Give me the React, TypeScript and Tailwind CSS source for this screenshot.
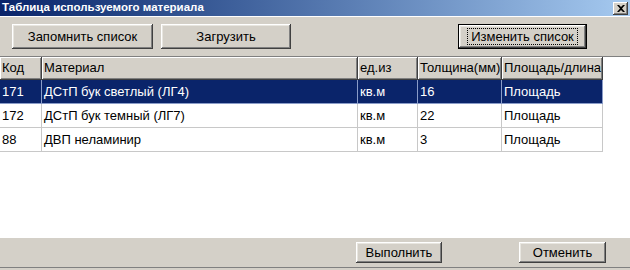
import React from "react";

interface Row {
  code: string;
  name: string;
  unit: string;
  thick: string;
  kind: string;
}

const rows: Row[] = [
  { code: "171", name: "ДСтП бук светлый (ЛГ4)", unit: "кв.м", thick: "16", kind: "Площадь" },
  { code: "172", name: "ДСтП бук темный (ЛГ7)", unit: "кв.м", thick: "22", kind: "Площадь" },
  { code: "88", name: "ДВП неламинир", unit: "кв.м", thick: "3", kind: "Площадь" },
];

const cols = "grid grid-cols-[42px_316px_60px_84px_101px]";

const btn =
  "flex items-center justify-center bg-[#d4d0c8] text-[13px] text-black shadow-[inset_-1px_-1px_#404040,inset_1px_1px_#ffffff,inset_-2px_-2px_#808080,inset_2px_2px_#e8e6e0]";

const Button = ({ label, className }: { label: string; className: string }) => (
  <div className={`${btn} ${className}`}>{label}</div>
);

const App = () => {
  const headers = ["Код", "Материал", "ед.из", "Толщина(мм)", "Площадь/длина"];

  return (
    <div className="w-[630px] h-[270px] bg-[#d4d0c8] flex flex-col font-['Liberation_Sans',Arial,sans-serif] overflow-hidden">
      {/* заголовок окна */}
      <div className="h-[16px] flex items-center justify-between bg-gradient-to-r from-[#0a246a] to-[#a6caf0] pl-[2px] pr-[2px]">
        <span className="text-white text-[11.5px] font-bold leading-none">Таблица используемого материала</span>
        <div className="w-[15px] h-[13px] bg-[#d4d0c8] flex items-center justify-center shadow-[inset_-1px_-1px_#404040,inset_1px_1px_#ffffff,inset_-2px_-2px_#808080]">
          <svg width="8" height="7" viewBox="0 0 8 7">
            <path d="M0 0 L2 0 L4 2 L6 0 L8 0 L5 3.5 L8 7 L6 7 L4 5 L2 7 L0 7 L3 3.5 Z" fill="#000" />
          </svg>
        </div>
      </div>
      <div className="h-px bg-white" />

      {/* панель кнопок */}
      <div className="h-[39px] flex items-start pt-[7px]">
        <Button label="Запомнить список" className="ml-[12px] w-[141px] h-[25px]" />
        <Button label="Загрузить" className="ml-[8px] w-[130px] h-[25px]" />
        <div className="ml-[167px] w-[129px] h-[25px] border border-black">
          <div className={`${btn} w-full h-full`}>
            <span className="border border-dotted border-black px-[3px] leading-[15px]">Изменить список</span>
          </div>
        </div>
      </div>

      {/* таблица */}
      <div className="h-[181px] bg-white border-t border-[#808080] text-[13px]">
        <div className={`${cols} h-[23px]`}>
          {headers.map((h) => (
            <div
              key={h}
              className="bg-[#d4d0c8] pl-[2px] flex items-center border-r border-b border-[#404040] shadow-[inset_1px_1px_#ffffff,inset_-1px_-1px_#808080] whitespace-nowrap overflow-hidden"
            >
              {h}
            </div>
          ))}
        </div>
        {rows.map((r, i) => {
          const sel = i === 0;
          const cell = sel
            ? "h-[24px] pl-[2px] flex items-center border-r border-b border-[#8a9cc8] text-white"
            : "h-[24px] pl-[2px] flex items-center border-r border-b border-[#c8c8c8] text-black";
          return (
            <div key={r.code} className={`${cols} ${sel ? "bg-[#0a246a]" : "bg-white"} w-[603px]`}>
              <div className={cell}>{r.code}</div>
              <div className={cell}>{r.name}</div>
              <div className={cell}>{r.unit}</div>
              <div className={cell}>{r.thick}</div>
              <div className={cell}>{r.kind}</div>
            </div>
          );
        })}
      </div>

      {/* нижняя панель */}
      <div className="h-px bg-white" />
      <div className="h-[30px] flex items-center border-b border-[#808080]">
        <Button label="Выполнить" className="ml-[356px] w-[86px] h-[21px]" />
        <Button label="Отменить" className="ml-[77px] w-[87px] h-[21px]" />
      </div>
    </div>
  );
};

export default App;
